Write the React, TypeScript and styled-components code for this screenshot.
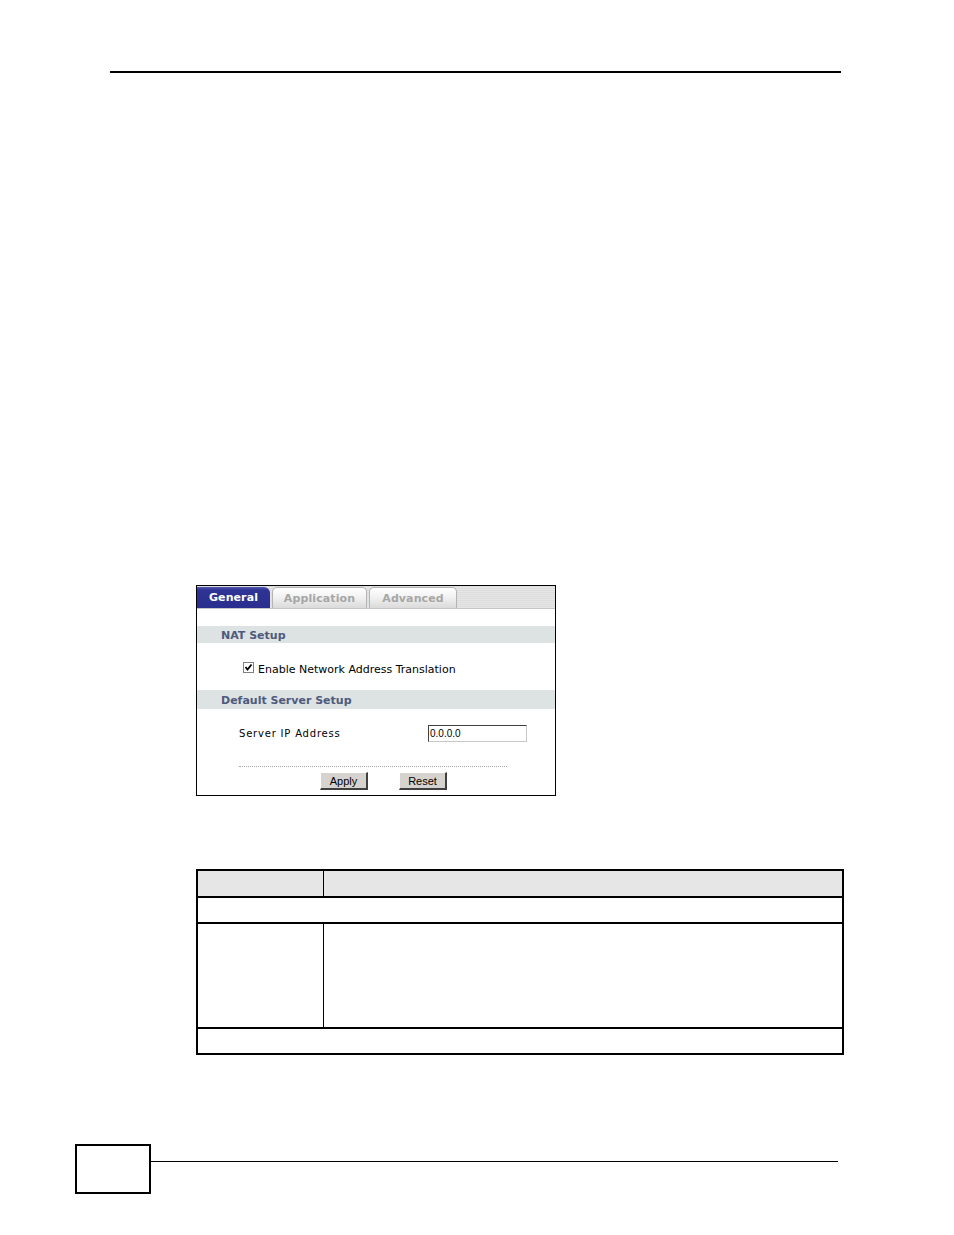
import styled, { createGlobalStyle } from "styled-components";

const Global = createGlobalStyle`
  html, body {
    margin: 0;
    padding: 0;
    background: #ffffff;
  }
  body {
    font-family: "DejaVu Sans", Verdana, sans-serif;
  }
`;

const Page = styled.div`
  position: relative;
  width: 954px;
  height: 1235px;
  overflow: hidden;
  background: #fff;
`;

const HeaderRule = styled.div`
  margin: 71px 0 0 110px;
  width: 731px;
  height: 2px;
  background: #000;
`;

const Panel = styled.div`
  margin: 512px 0 0 196px;
  width: 358px;
  height: 209px;
  border: 1px solid #000;
  display: flex;
  flex-direction: column;
  background: #fff;
`;

const TabBar = styled.div`
  display: flex;
  align-items: flex-end;
  height: 23px;
  padding-top: 1px;
  box-sizing: border-box;
  border-bottom: 1px solid #c4c4c4;
  background: repeating-linear-gradient(
    to bottom,
    #dcdcdc 0px,
    #dcdcdc 1px,
    #e6e6e6 1px,
    #e6e6e6 2px
  );
`;

const Tab = styled.div<{ $active?: boolean; $width: number }>`
  width: ${(p) => p.$width}px;
  height: 21px;
  box-sizing: border-box;
  margin-right: 2px;
  display: flex;
  align-items: center;
  justify-content: center;
  font-size: 11px;
  font-weight: bold;
  letter-spacing: 0.1px;
  border-radius: 0 6px 0 0;
  color: ${(p) => (p.$active ? "#ffffff" : "#a6a6a6")};
  background: ${(p) =>
    p.$active
      ? "linear-gradient(to bottom, #5458b0 0px, #2f3394 3px, #2a2e8e 100%)"
      : "linear-gradient(to bottom, #ffffff 0%, #f2f2f2 45%, #dadada 100%)"};
  border: ${(p) => (p.$active ? "none" : "1px solid #b4b4b4")};
  border-bottom: none;
  ${(p) => !p.$active && "border-radius: 5px 5px 0 0;"}
`;

const SectionHead = styled.div<{ $top: number; $height: number; $pad: number }>`
  margin-top: ${(p) => p.$top}px;
  height: ${(p) => p.$height}px;
  box-sizing: border-box;
  padding: ${(p) => p.$pad}px 0 0 24px;
  background: #dde3e3;
  display: flex;
  align-items: center;
  font-size: 11px;
  font-weight: bold;
  letter-spacing: 0;
  color: #4e5a7c;
`;

const CheckRow = styled.label`
  display: flex;
  align-items: center;
  height: 47px;
  box-sizing: border-box;
  padding: 6px 0 0 46px;
  font-size: 11px;
  color: #000;
`;

const CheckBox = styled.span`
  width: 9px;
  height: 9px;
  border: 1px solid #808080;
  background: #fff;
  margin-right: 4px;
  margin-top: -4px;
  display: flex;
  align-items: center;
  justify-content: center;
`;

const FieldRow = styled.div`
  display: flex;
  align-items: center;
  margin-top: 15px;
  height: 18px;
  padding-left: 42px;
  font-size: 10px;
  letter-spacing: 0.8px;
  color: #000;
`;

const FieldLabel = styled.span`
  width: 189px;
`;

const TextInput = styled.div`
  width: 99px;
  height: 17px;
  box-sizing: border-box;
  border-top: 1px solid #404040;
  border-left: 1px solid #404040;
  border-right: 1px solid #c8c8c8;
  border-bottom: 1px solid #c8c8c8;
  padding-left: 1px;
  font-family: "Liberation Sans", Arial, sans-serif;
  font-size: 10px;
  letter-spacing: 0;
  display: flex;
  align-items: center;
`;

const Dotted = styled.div`
  margin: 24px 0 0 42px;
  width: 268px;
  border-top: 1px dotted #a8a8a8;
`;

const ButtonRow = styled.div`
  display: flex;
  margin: 5px 0 0 123px;
  gap: 31px;
`;

const Button = styled.div`
  width: 48px;
  height: 18px;
  box-sizing: border-box;
  background: #d6d3ce;
  border-top: 1px solid #ffffff;
  border-left: 1px solid #ffffff;
  border-right: 2px solid #404040;
  border-bottom: 2px solid #404040;
  font-family: "Liberation Sans", Arial, sans-serif;
  font-size: 11px;
  color: #000;
  display: flex;
  align-items: center;
  justify-content: center;
`;

const Table = styled.table`
  margin: 73px 0 0 196px;
  width: 648px;
  border-collapse: collapse;
  border: 2px solid #000;
`;

const Row = styled.tr<{ $height: number; $head?: boolean }>`
  height: ${(p) => p.$height}px;
  background: ${(p) => (p.$head ? "#e6e6e6" : "#fff")};
  border-bottom: 2px solid #000;
`;

const Cell = styled.td<{ $left?: boolean }>`
  padding: 0;
  ${(p) => p.$left && "width: 125px; border-right: 1px solid #000;"}
`;

const Footer = styled.div`
  display: flex;
  align-items: flex-start;
  margin: 89px 0 0 75px;
`;

const PageBox = styled.div`
  width: 72px;
  height: 46px;
  border: 2px solid #000;
`;

const FooterRule = styled.div`
  margin-top: 17px;
  width: 687px;
  height: 1px;
  background: #000;
`;

export default function App() {
  return (
    <Page>
      <Global />
      <HeaderRule />
      <Panel>
        <TabBar>
          <Tab $active $width={73}>General</Tab>
          <Tab $width={95}>Application</Tab>
          <Tab $width={88}>Advanced</Tab>
        </TabBar>
        <SectionHead $top={17} $height={17} $pad={1}>NAT Setup</SectionHead>
        <CheckRow>
          <CheckBox>
            <svg width="9" height="9" viewBox="0 0 9 9">
              <path d="M1.5 4 L3.5 6.5 L7.5 1.5" stroke="#000" strokeWidth="1.8" fill="none" />
            </svg>
          </CheckBox>
          Enable Network Address Translation
        </CheckRow>
        <SectionHead $top={0} $height={19} $pad={2}>Default Server Setup</SectionHead>
        <FieldRow>
          <FieldLabel>Server IP Address</FieldLabel>
          <TextInput>0.0.0.0</TextInput>
        </FieldRow>
        <Dotted />
        <ButtonRow>
          <Button>Apply</Button>
          <Button>Reset</Button>
        </ButtonRow>
      </Panel>
      <Table>
        <tbody>
          <Row $height={27} $head>
            <Cell $left />
            <Cell />
          </Row>
          <Row $height={26}>
            <Cell colSpan={2} />
          </Row>
          <Row $height={105}>
            <Cell $left />
            <Cell />
          </Row>
          <Row $height={26}>
            <Cell colSpan={2} />
          </Row>
        </tbody>
      </Table>
      <Footer>
        <PageBox />
        <FooterRule />
      </Footer>
    </Page>
  );
}
